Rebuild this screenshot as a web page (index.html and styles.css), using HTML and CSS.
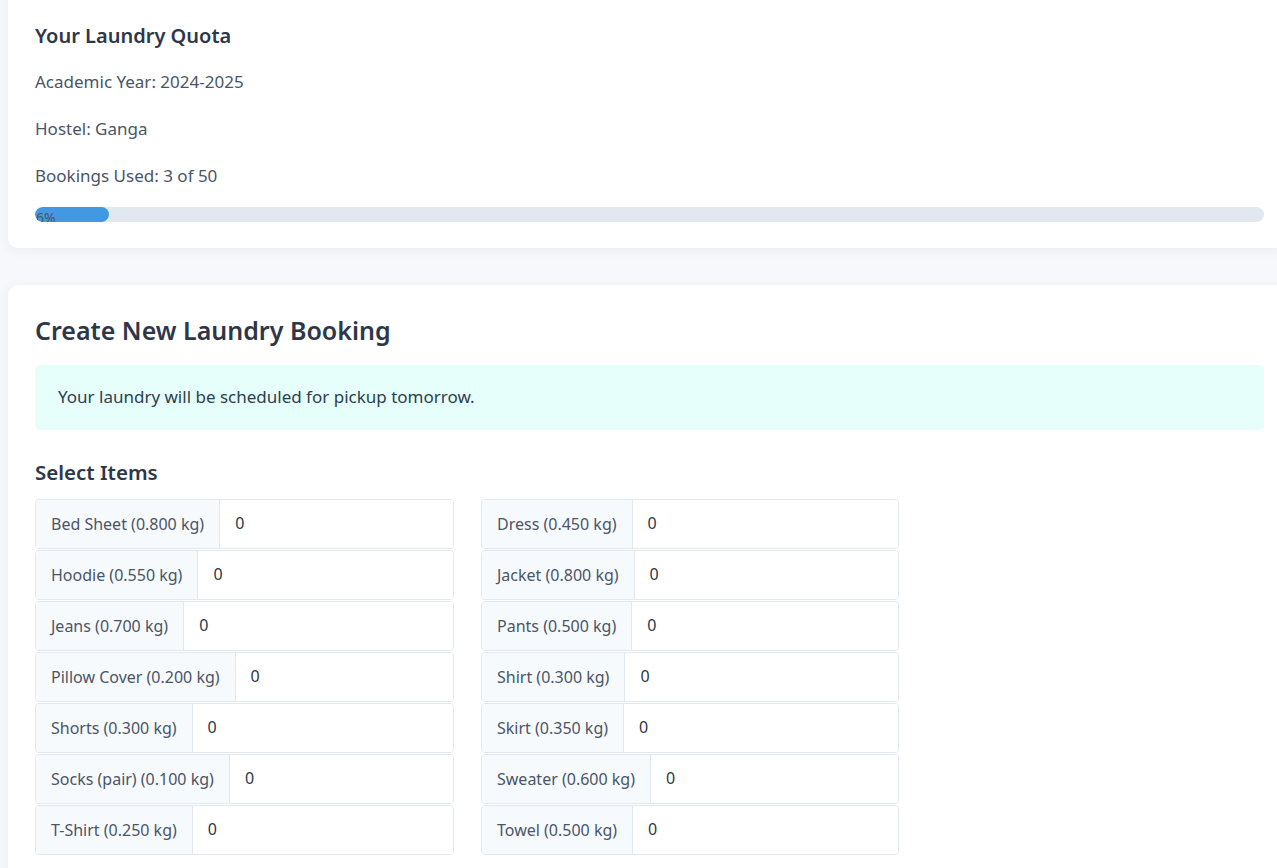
FILE: index.html
```html
<!DOCTYPE html>
<html lang="en">
<head>
<meta charset="utf-8">
<title>Laundry Booking</title>
<link rel="stylesheet" href="styles.css">
</head>
<body>
<main class="page">
  <section class="card quota">
    <h2 class="quota-title">Your Laundry Quota</h2>
    <div class="quota-lines">
      <p>Academic Year: 2024-2025</p>
      <p>Hostel: Ganga</p>
      <p>Bookings Used: 3 of 50</p>
    </div>
    <div class="progress">
      <div class="progress-fill" style="width: 6%;">6%</div>
    </div>
  </section>

  <section class="card booking">
    <h1 class="booking-title">Create New Laundry Booking</h1>
    <div class="alert">Your laundry will be scheduled for pickup tomorrow.</div>
    <h3 class="section-title">Select Items</h3>
    <div class="items">
      <label class="item"><span class="item-label">Bed Sheet (0.800 kg)</span><input class="item-input" type="number" value="0"></label>
      <label class="item"><span class="item-label">Dress (0.450 kg)</span><input class="item-input" type="number" value="0"></label>
      <label class="item"><span class="item-label">Hoodie (0.550 kg)</span><input class="item-input" type="number" value="0"></label>
      <label class="item"><span class="item-label">Jacket (0.800 kg)</span><input class="item-input" type="number" value="0"></label>
      <label class="item"><span class="item-label">Jeans (0.700 kg)</span><input class="item-input" type="number" value="0"></label>
      <label class="item"><span class="item-label">Pants (0.500 kg)</span><input class="item-input" type="number" value="0"></label>
      <label class="item"><span class="item-label">Pillow Cover (0.200 kg)</span><input class="item-input" type="number" value="0"></label>
      <label class="item"><span class="item-label">Shirt (0.300 kg)</span><input class="item-input" type="number" value="0"></label>
      <label class="item"><span class="item-label">Shorts (0.300 kg)</span><input class="item-input" type="number" value="0"></label>
      <label class="item"><span class="item-label">Skirt (0.350 kg)</span><input class="item-input" type="number" value="0"></label>
      <label class="item"><span class="item-label">Socks (pair) (0.100 kg)</span><input class="item-input" type="number" value="0"></label>
      <label class="item"><span class="item-label">Sweater (0.600 kg)</span><input class="item-input" type="number" value="0"></label>
      <label class="item"><span class="item-label">T-Shirt (0.250 kg)</span><input class="item-input" type="number" value="0"></label>
      <label class="item"><span class="item-label">Towel (0.500 kg)</span><input class="item-input" type="number" value="0"></label>
    </div>
  </section>
</main>
</body>
</html>
```

FILE: styles.css
```css
html, body {
  margin: 0;
  overflow: hidden;
}
body {
  background: #f7f8fb;
  font-family: "Noto Sans", sans-serif;
  color: #4a5568;
  height: 868px;
}
.page {
  width: 1283px;
  padding: 0 8px;
  margin-top: -20px;
  display: flex;
  flex-direction: column;
  gap: 37px;
}
.card {
  background: #ffffff;
  border-radius: 10px;
  box-shadow: 0 2px 12px rgba(30, 45, 90, 0.06);
  padding: 27px;
}
.quota {
  padding-top: 42px;
  padding-bottom: 26px;
}
.quota-title {
  margin: 0;
  font-size: 20px;
  line-height: 28px;
  font-weight: 600;
  color: #2d3748;
}
.quota-lines {
  display: flex;
  flex-direction: column;
  gap: 23px;
  margin-top: 20px;
}
.quota-lines p {
  margin: 0;
  font-size: 17px;
  line-height: 24px;
}
.progress {
  margin-top: 19px;
  height: 15px;
  background: #e2e8f0;
  border-radius: 8px;
  overflow: hidden;
}
.progress-fill {
  height: 100%;
  background: #4299e1;
  border-radius: 10px;
  font-size: 14px;
  line-height: 22px;
  color: #4a5568;
  padding-left: 1px;
  box-sizing: border-box;
  white-space: nowrap;
}
.booking {
  padding-top: 28px;
}
.booking-title {
  margin: 0;
  font-size: 25px;
  line-height: 34px;
  font-weight: 600;
  color: #2d3748;
}
.alert {
  margin-top: 18px;
  background: #e6fffa;
  border-radius: 5px;
  padding: 20px 23px 21px;
  font-size: 17px;
  line-height: 24px;
  color: #2c3e50;
}
.section-title {
  margin: 28px 0 0;
  font-size: 20.5px;
  line-height: 28px;
  font-weight: 600;
  color: #2d3748;
}
.items {
  margin-top: 13px;
  display: grid;
  grid-template-columns: 419px 418px;
  column-gap: 27px;
  row-gap: 1px;
}
.item {
  display: flex;
  height: 50px;
  box-sizing: border-box;
  border: 1px solid #e2e8f0;
  border-radius: 4px;
  overflow: hidden;
}
.item-label {
  display: flex;
  align-items: center;
  padding: 0 15px;
  background: #f7fafc;
  border-right: 1px solid #e2e8f0;
  font-size: 16px;
  color: #4a5568;
  white-space: nowrap;
}
.item-input {
  flex: 1;
  min-width: 0;
  border: none;
  outline: none;
  padding: 0 15px 2px;
  font-family: inherit;
  font-size: 16px;
  color: #2d3748;
  background: #ffffff;
  -moz-appearance: textfield;
  appearance: textfield;
}
.item-input::-webkit-outer-spin-button,
.item-input::-webkit-inner-spin-button {
  -webkit-appearance: none;
  margin: 0;
}
```
